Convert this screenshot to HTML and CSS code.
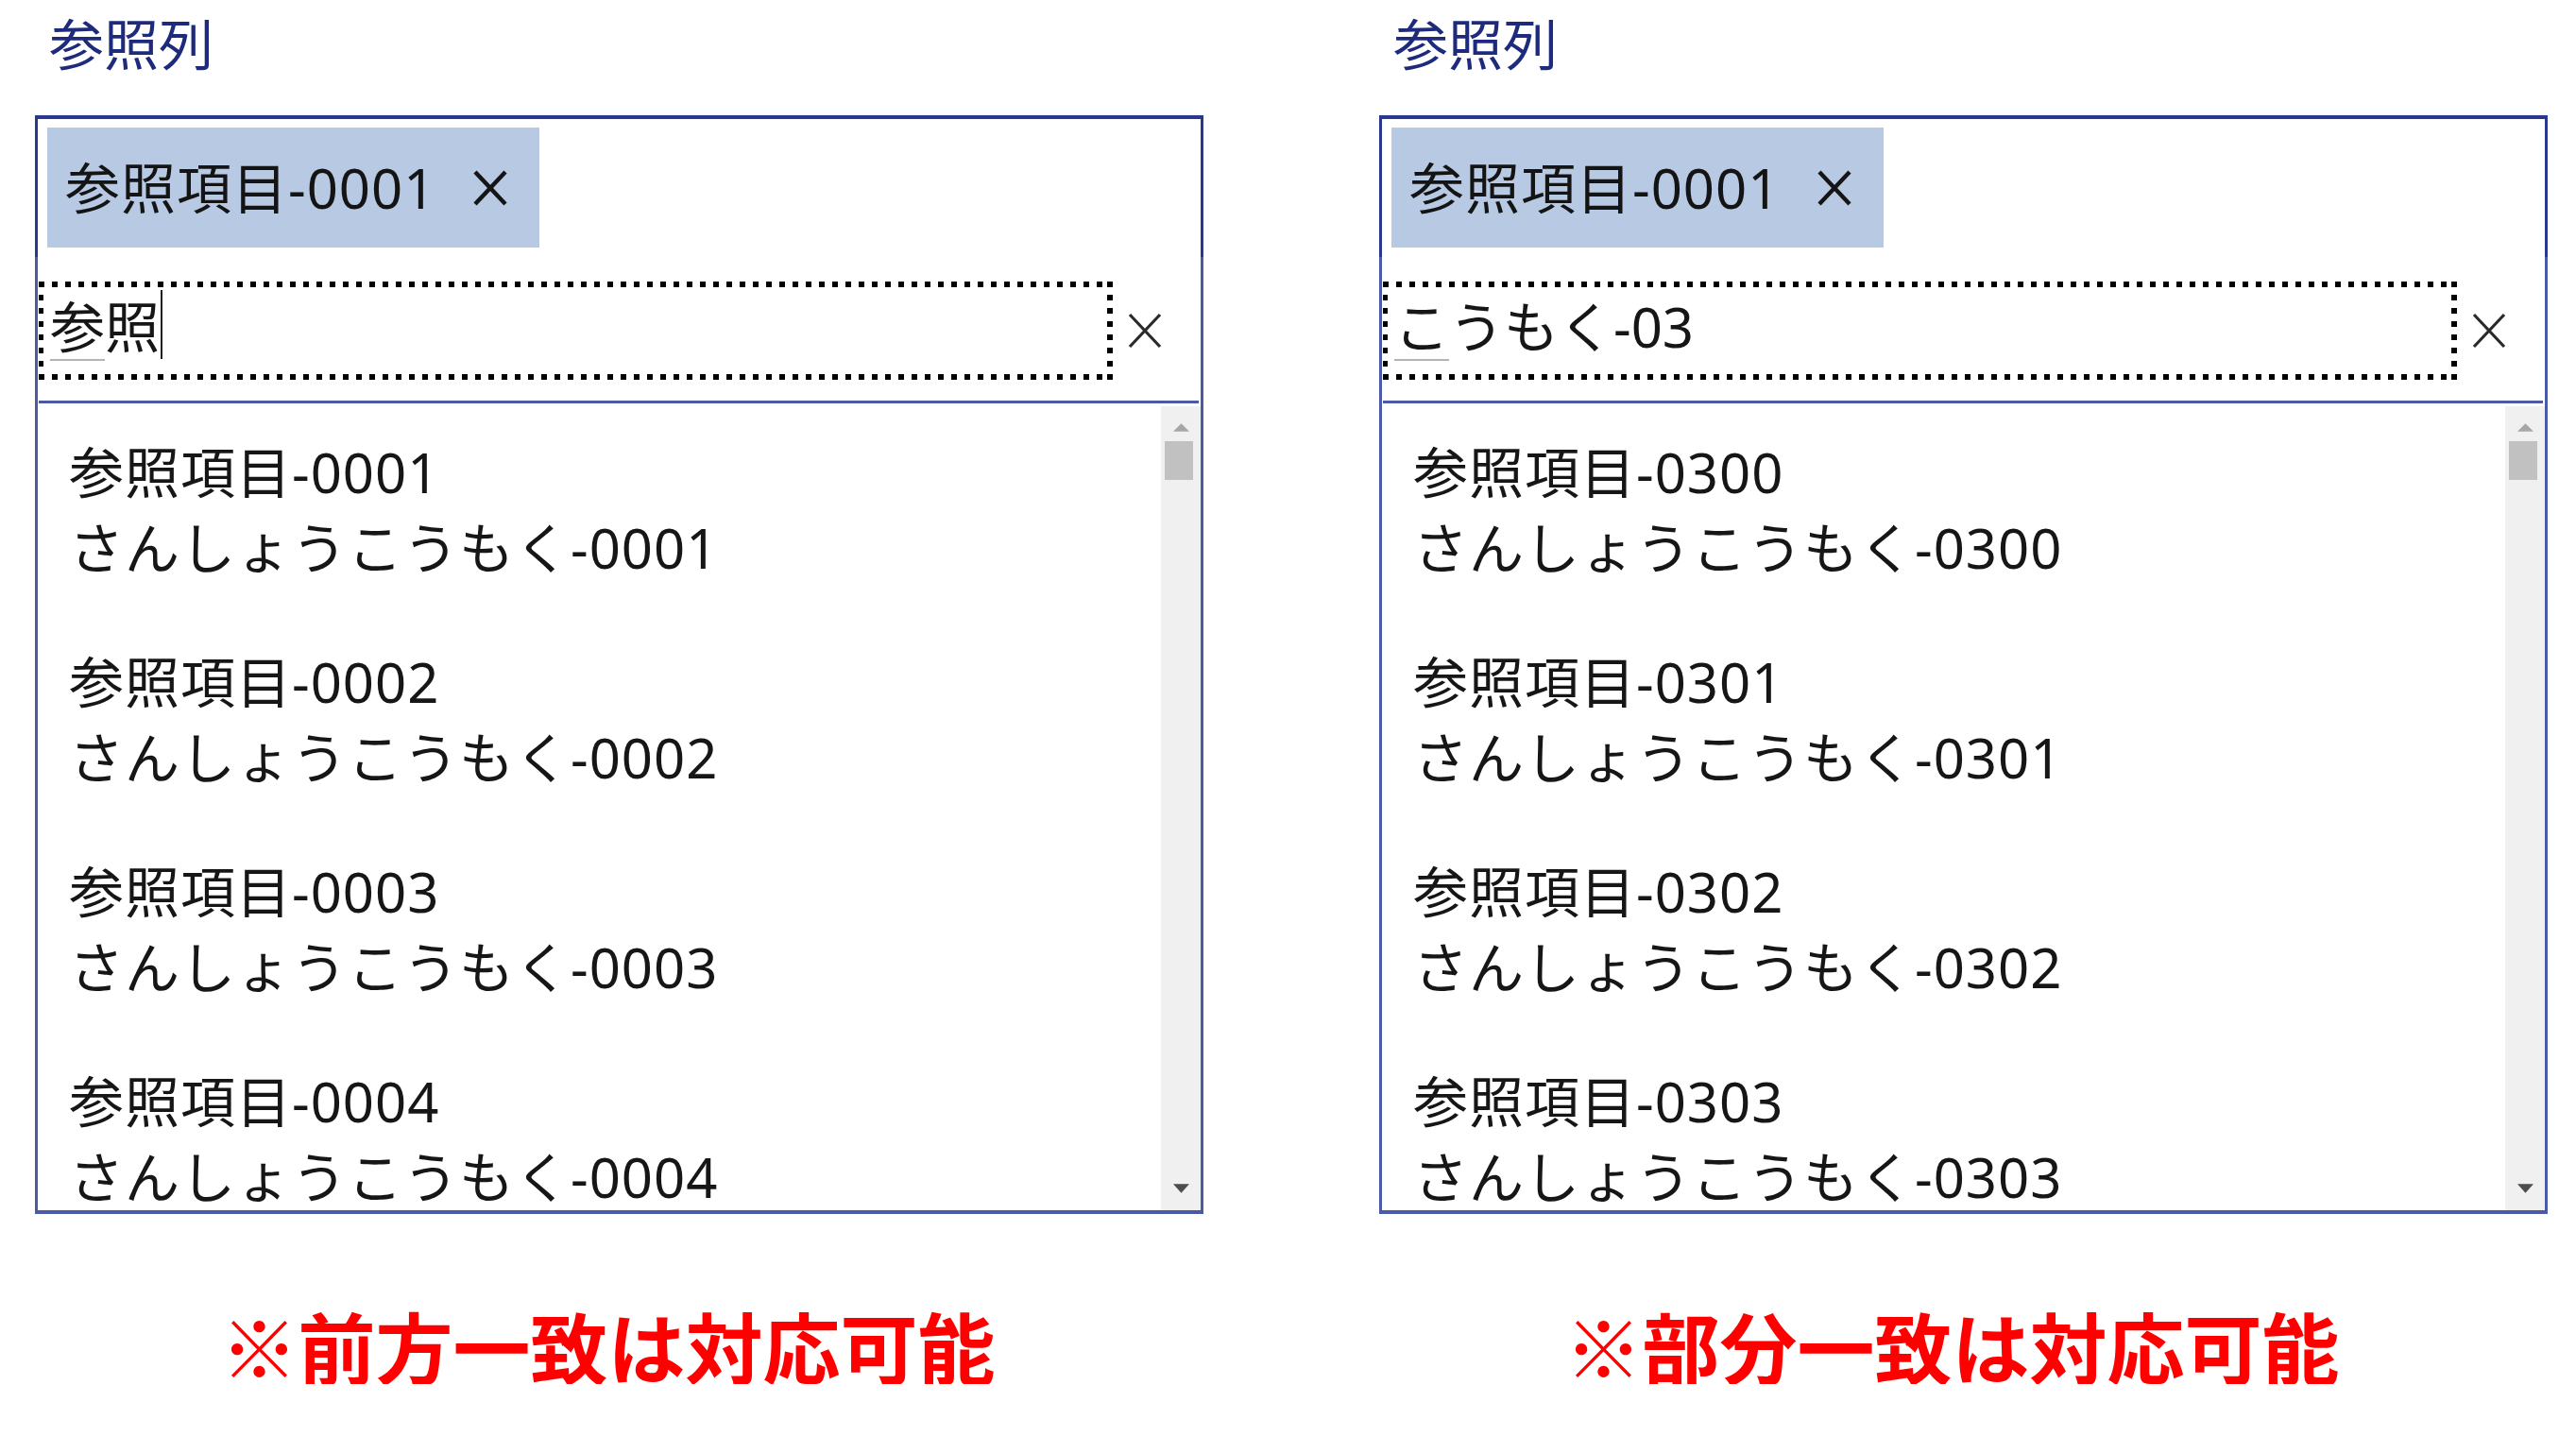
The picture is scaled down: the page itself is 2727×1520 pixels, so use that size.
FILE: index.html
```html
<!DOCTYPE html>
<html lang="ja">
<head>
<meta charset="utf-8">
<title>参照列</title>
<link rel="stylesheet" href="styles.css">
</head>
<body>
<main class="page">
  <section class="panel">
    <h2 class="label">参照列</h2>
    <div class="combo">
      <div class="combo-head">
        <span class="chip"><span class="chip-text">参照項目-0001</span><svg class="chip-x" viewBox="0 0 36 38"><path d="M2 2 L34 36 M34 2 L2 36" /></svg></span>
      </div>
      <div class="combo-body">
        <div class="search-row">
          <div class="search"><span class="ime">参</span>照<span class="caret"></span></div>
          <svg class="clear" viewBox="0 0 36 38"><path d="M2 2 L34 36 M34 2 L2 36" /></svg>
        </div>
        <div class="divider"></div>
        <div class="list">
          <ul class="items">
            <li class="item"><span>参照項目-0001</span><span>さんしょうこうもく-0001</span></li>
            <li class="item"><span>参照項目-0002</span><span>さんしょうこうもく-0002</span></li>
            <li class="item"><span>参照項目-0003</span><span>さんしょうこうもく-0003</span></li>
            <li class="item"><span>参照項目-0004</span><span>さんしょうこうもく-0004</span></li>
          </ul>
          <div class="scrollbar">
            <svg class="arrow up" viewBox="0 0 18 9"><path d="M9 0 L18 9 L0 9 Z" /></svg>
            <div class="thumb"></div>
            <svg class="arrow down" viewBox="0 0 18 10"><path d="M0 0 L18 0 L9 10 Z" /></svg>
          </div>
        </div>
      </div>
    </div>
    <p class="note">※前方一致は対応可能</p>
  </section>

  <section class="panel">
    <h2 class="label">参照列</h2>
    <div class="combo">
      <div class="combo-head">
        <span class="chip"><span class="chip-text">参照項目-0001</span><svg class="chip-x" viewBox="0 0 36 38"><path d="M2 2 L34 36 M34 2 L2 36" /></svg></span>
      </div>
      <div class="combo-body">
        <div class="search-row">
          <div class="search"><span class="ime">こ</span>うもく-03</div>
          <svg class="clear" viewBox="0 0 36 38"><path d="M2 2 L34 36 M34 2 L2 36" /></svg>
        </div>
        <div class="divider"></div>
        <div class="list">
          <ul class="items">
            <li class="item"><span>参照項目-0300</span><span>さんしょうこうもく-0300</span></li>
            <li class="item"><span>参照項目-0301</span><span>さんしょうこうもく-0301</span></li>
            <li class="item"><span>参照項目-0302</span><span>さんしょうこうもく-0302</span></li>
            <li class="item"><span>参照項目-0303</span><span>さんしょうこうもく-0303</span></li>
          </ul>
          <div class="scrollbar">
            <svg class="arrow up" viewBox="0 0 18 9"><path d="M9 0 L18 9 L0 9 Z" /></svg>
            <div class="thumb"></div>
            <svg class="arrow down" viewBox="0 0 18 10"><path d="M0 0 L18 0 L9 10 Z" /></svg>
          </div>
        </div>
      </div>
    </div>
    <p class="note">※部分一致は対応可能</p>
  </section>
</main>
</body>
</html>
```

FILE: styles.css
```css
* { box-sizing: border-box; }

html, body {
  margin: 0;
  background: #ffffff;
}

body {
  font-family: "Noto Sans", "Noto Sans CJK JP", sans-serif;
  color: #161616;
}

.page {
  display: grid;
  grid-template-columns: 1237px 1237px;
  column-gap: 186px;
  padding-left: 37px;
}

.panel {
  display: flex;
  flex-direction: column;
}

.label {
  margin: 0;
  height: 122px;
  padding: 18px 0 0 15px;
  font-size: 58px;
  line-height: 58px;
  font-weight: 400;
  color: #1e2b7c;
}

.combo {
  width: 1237px;
}

.combo-head {
  display: flex;
  border: 3px solid #283790;
  border-top-width: 4px;
  border-bottom: 0;
  padding: 9px 0 10px 10px;
}

.chip {
  display: flex;
  align-items: center;
  height: 127px;
  padding: 0 34px 0 19px;
  background: #b8c9e4;
  font-size: 58px;
  line-height: 58px;
  letter-spacing: 1px;
  color: #141414;
}

.chip-x {
  width: 36px;
  height: 38px;
  margin-left: 40px;
  fill: none;
  stroke: #151515;
  stroke-width: 4.4;
}

.combo-body {
  border: 3px solid #4a5aa4;
  border-top: 0;
  border-bottom-width: 4px;
}

.search-row {
  display: flex;
  align-items: center;
  padding: 26px 0 22px 1px;
}

.search {
  width: 1137px;
  height: 104px;
  padding: 8px 12px 16px;
  font-size: 58px;
  line-height: 80px;
  white-space: nowrap;
  background:
    repeating-linear-gradient(90deg, #000 0 6px, transparent 6px 14px) left top / 100% 6px no-repeat,
    repeating-linear-gradient(90deg, #000 0 6px, transparent 6px 14px) left bottom / 100% 6px no-repeat,
    repeating-linear-gradient(180deg, #000 0 6px, transparent 6px 14px) left top / 5px 100% no-repeat,
    repeating-linear-gradient(180deg, #000 0 6px, transparent 6px 14px) right top / 6px 100% no-repeat;
}

.ime {
  text-decoration: underline;
  text-decoration-color: #b4b4b4;
  text-decoration-thickness: 2px;
  text-underline-offset: 12px;
}

.caret {
  display: inline-block;
  width: 2px;
  height: 73px;
  margin-left: 1px;
  vertical-align: -12px;
  background: #202020;
}

.clear {
  width: 36px;
  height: 38px;
  margin-left: 16px;
  fill: none;
  stroke: #2a2a2a;
  stroke-width: 3.2;
}

.divider {
  height: 3px;
  margin: 0 2px 0 1px;
  background: #4a5aa4;
}

.list {
  display: flex;
  height: 854px;
}

.items {
  flex: 1;
  list-style: none;
  margin: 0;
  padding: 2px 0 0 33px;
}

.item {
  display: flex;
  flex-direction: column;
  row-gap: 12px;
  padding: 37px 0;
  font-size: 58px;
  line-height: 68px;
  letter-spacing: 1px;
  white-space: nowrap;
}

.scrollbar {
  width: 42px;
  margin-top: 3px;
  background: #f0f0f0;
  display: flex;
  flex-direction: column;
  align-items: center;
}

.arrow {
  width: 17px;
  height: 9px;
}

.arrow.up {
  margin-top: 18px;
  fill: #a6a6a6;
}

.arrow.down {
  margin-top: auto;
  margin-bottom: 18px;
  height: 10px;
  fill: #4d4d4d;
}

.thumb {
  width: 30px;
  height: 41px;
  margin: 10px 4px 0 0;
  background: #c1c1c1;
}

.note {
  margin: 98px 0 0;
  padding-right: 24px;
  text-align: center;
  font-family: "Noto Sans CJK JP", sans-serif;
  font-size: 82px;
  line-height: 82px;
  font-weight: 700;
  color: #ff0000;
}
```
